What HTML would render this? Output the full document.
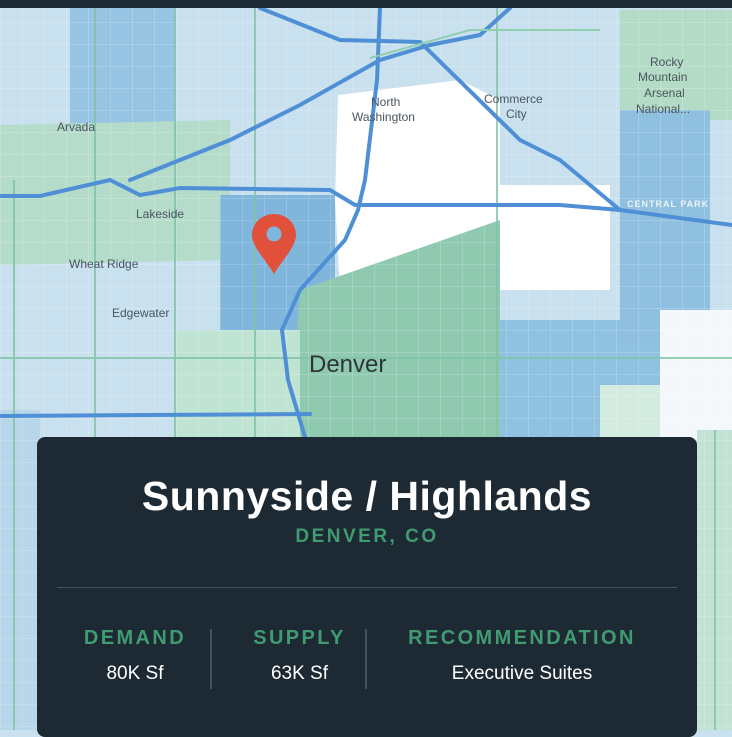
<!DOCTYPE html>
<html><head><meta charset="utf-8"><style>
html,body{margin:0;padding:0;width:732px;height:730px;overflow:hidden;background:#c9e0ee;font-family:"Liberation Sans",sans-serif}
#top{position:absolute;left:0;top:0;width:732px;height:8px;background:#1e2a33}
svg{position:absolute;left:0;top:0}
.card{position:absolute;left:37px;top:437px;width:660px;height:300px;background:#1e2a33;border-radius:8px;color:#fff;text-align:center}
.t{position:absolute;left:0;width:660px;top:36px;font-size:41px;font-weight:bold;letter-spacing:0.5px}
.sub{position:absolute;left:0;width:660px;top:89px;font-size:19px;font-weight:bold;color:#3f9b70;letter-spacing:2.5px}
.hr{position:absolute;left:20px;top:150px;width:620px;height:1px;background:#44525b}
.col{position:absolute;top:190px}
.col .h{font-size:20px;font-weight:bold;color:#3f9b70;letter-spacing:2.4px}
.col .v{font-size:19px;margin-top:13px}
.vl{position:absolute;top:192px;width:2px;height:60px;background:#44525b}
.lbl{font-family:"Liberation Sans",sans-serif;fill:#4a5560;font-size:12px}
</style></head><body>
<svg width="732" height="730" viewBox="0 0 732 730">
<defs><pattern id="g" width="22" height="22" patternUnits="userSpaceOnUse"><path d="M22 0 L0 0 0 22" fill="none" stroke="#ffffff" stroke-opacity=".35" stroke-width="1"/></pattern></defs>
<rect width="732" height="730" fill="#c9e0ee"/>
<rect x="70" y="8" width="105" height="175" fill="#97c4e2"/>
<polygon points="0,125 230,120 230,260 0,265" fill="#b5dccb"/>
<rect x="220" y="195" width="115" height="140" fill="#80b6dc"/>
<polygon points="338,95 460,80 500,100 500,185 610,185 610,290 500,290 340,290 335,200" fill="#ffffff"/>
<polygon points="300,290 500,220 500,437 290,437" fill="#8fcab0"/>
<polygon points="175,330 300,330 300,437 175,437" fill="#c0e4d3"/>
<rect x="500" y="320" width="160" height="117" fill="#8fc1e1"/>
<rect x="620" y="10" width="112" height="110" fill="#b3dbc5"/>
<rect x="620" y="110" width="90" height="235" fill="#8fc0e0"/>
<rect x="660" y="310" width="72" height="130" fill="#f4f8fa"/>
<rect x="600" y="385" width="60" height="52" fill="#d4ebe0"/>
<rect x="0" y="410" width="40" height="320" fill="#b7d6ea"/>
<rect x="697" y="430" width="35" height="300" fill="#c1e2d4"/>
<rect width="732" height="730" fill="url(#g)"/>
<g stroke="#7fc3a5" stroke-width="2" fill="none" opacity=".8">
<line x1="0" y1="358" x2="732" y2="358"/><line x1="255" y1="8" x2="255" y2="437"/>
<line x1="95" y1="8" x2="95" y2="730"/><line x1="175" y1="8" x2="175" y2="437"/>
<line x1="497" y1="8" x2="497" y2="437"/><line x1="14" y1="180" x2="14" y2="730"/>
<line x1="715" y1="430" x2="715" y2="730"/>
</g>
<g stroke="#4f8fd6" stroke-width="4" fill="none" stroke-linecap="round">
<path d="M0 196 L40 196 L110 180 L140 195 L180 188 L330 190 L355 205 L560 205 L620 210 L732 225"/>
<path d="M380 8 L377 80 L365 180 L358 210 L345 240 L300 290 L282 330 L288 380 L305 437"/>
<path d="M260 8 L340 40 L420 42 L520 140 L560 160 L620 210"/>
<path d="M130 180 L230 140 L300 105 L380 60 L430 45 L480 35 L510 8"/>
<path d="M0 416 L310 414"/>
</g>
<g stroke="#8fcfb0" stroke-width="2" fill="none"><path d="M370 58 L470 30 L600 30"/></g>
<text x="57" y="131" class="lbl">Arvada</text>
<text x="136" y="218" class="lbl">Lakeside</text>
<text x="69" y="268" class="lbl">Wheat Ridge</text>
<text x="112" y="317" class="lbl">Edgewater</text>
<text x="371" y="106" class="lbl">North</text>
<text x="352" y="121" class="lbl">Washington</text>
<text x="484" y="103" class="lbl">Commerce</text>
<text x="506" y="118" class="lbl">City</text>
<text x="650" y="66" class="lbl" fill="#5a7a6a">Rocky</text>
<text x="638" y="81" class="lbl">Mountain</text>
<text x="644" y="97" class="lbl">Arsenal</text>
<text x="636" y="113" class="lbl">National...</text>
<text x="627" y="207" font-size="9" fill="#eaf3f8" font-weight="bold" letter-spacing="1">CENTRAL PARK</text>
<text x="309" y="372" font-size="24" fill="#2e3438">Denver</text>
<path d="M274 214 C262 214 252 223 252 235 C252 247 266 260 274 274 C282 260 296 247 296 235 C296 223 286 214 274 214 Z" fill="#e0503b"/>
<circle cx="274" cy="234" r="7.5" fill="#80b6dc"/>
</svg>
<div id="top"></div>
<div class="card">
<div class="t">Sunnyside / Highlands</div>
<div class="sub">DENVER, CO</div>
<div class="hr"></div>
<div class="col" style="left:38px;width:120px"><div class="h">DEMAND</div><div class="v">80K Sf</div></div>
<div class="vl" style="left:173px"></div>
<div class="col" style="left:190px;width:145px"><div class="h">SUPPLY</div><div class="v">63K Sf</div></div>
<div class="vl" style="left:328px"></div>
<div class="col" style="left:345px;width:280px"><div class="h">RECOMMENDATION</div><div class="v">Executive Suites</div></div>
</div>
</body></html>
